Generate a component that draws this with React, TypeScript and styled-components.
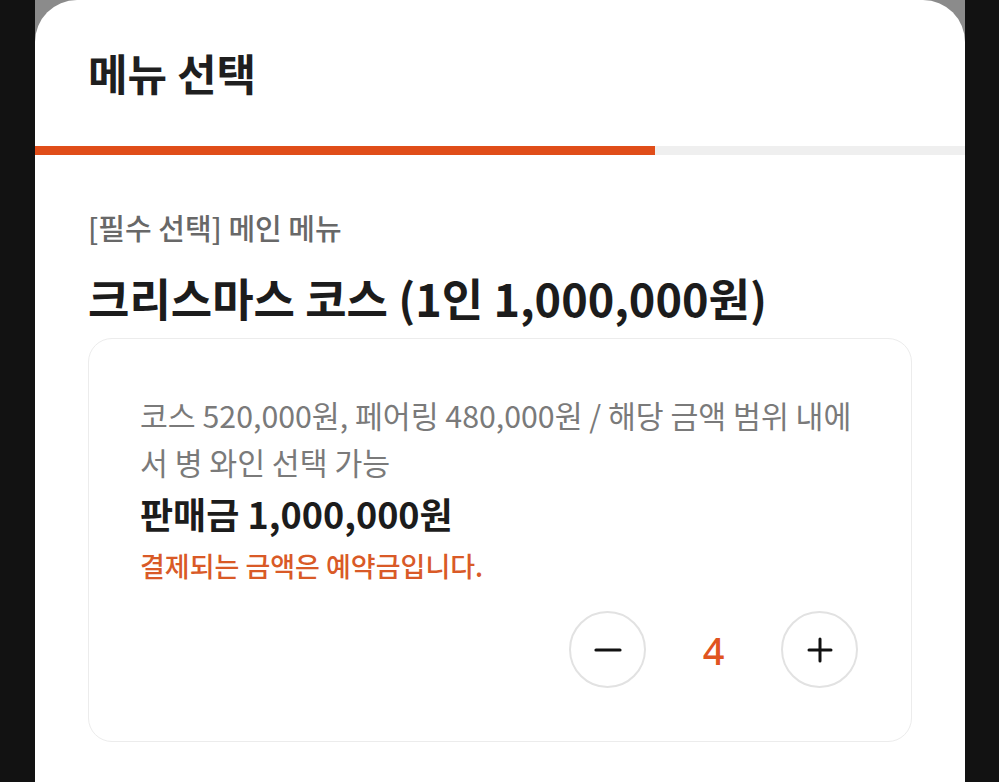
import React from "react";
import styled, { createGlobalStyle } from "styled-components";

const Global = createGlobalStyle`
  html, body { margin: 0; padding: 0; background: #121212; }
  body { font-family: "Noto Sans CJK KR", "Noto Sans", sans-serif; }
  * { box-sizing: border-box; }
`;

const Frame = styled.div`
  width: 999px;
  height: 782px;
  background: #121212;
  display: flex;
  justify-content: center;
  overflow: hidden;
`;

const Screen = styled.div`
  width: 930px;
  height: 782px;
  margin-left: 1px;
  background: #8b8b8b;
  display: flex;
  flex-direction: column;
`;

const Sheet = styled.div`
  flex: 1;
  background: #ffffff;
  border-radius: 42px 42px 0 0;
  display: flex;
  flex-direction: column;
`;

const Header = styled.div`
  height: 146px;
  padding: 42px 53px 0;
`;

const Title = styled.h1`
  margin: 0;
  font-size: 43px;
  line-height: 60px;
  font-weight: 700;
  color: #1f1f1f;
`;

const Progress = styled.div`
  height: 9px;
  background: #efefef;
  display: flex;
`;

const ProgressFill = styled.div`
  background: #e04d19;
  height: 100%;
`;

const Body = styled.div`
  padding: 54px 53px 0;
  display: flex;
  flex-direction: column;
`;

const Section = styled.div`
  font-size: 29px;
  line-height: 36px;
  font-weight: 500;
  color: #686868;
`;

const CourseTitle = styled.h2`
  margin: 23px 0 0;
  font-size: 45px;
  line-height: 60px;
  font-weight: 700;
  color: #1c1c1c;
`;

const Card = styled.div`
  margin-top: 10px;
  border: 1px solid #ececec;
  border-radius: 24px;
  padding: 53px 53px 53px 51px;
  display: flex;
  flex-direction: column;
`;

const Desc = styled.p`
  margin: 0;
  font-size: 30.3px;
  line-height: 47px;
  font-weight: 400;
  color: #7a7a7a;
`;

const Price = styled.div`
  margin-top: 2px;
  font-size: 36px;
  line-height: 50px;
  font-weight: 700;
  color: #1c1c1c;
`;

const Notice = styled.div`
  margin-top: 8px;
  font-size: 27px;
  line-height: 40px;
  font-weight: 500;
  color: #d95a27;
`;

const Stepper = styled.div`
  margin-top: 25px;
  display: flex;
  justify-content: flex-end;
  align-items: center;
`;

const RoundButton = styled.button`
  width: 77px;
  height: 77px;
  border-radius: 50%;
  border: 2px solid #e2e2e2;
  background: #fff;
  display: flex;
  align-items: center;
  justify-content: center;
  padding: 0;
  color: #111;
`;

const Count = styled.div`
  width: 135px;
  text-align: center;
  font-family: "Noto Sans", sans-serif;
  font-size: 38px;
  font-weight: 500;
  color: #e0541f;
`;

const Minus = () => (
  <svg width="28" height="28" viewBox="0 0 28 28">
    <line x1="2" y1="14" x2="26" y2="14" stroke="#111" strokeWidth="3.2" strokeLinecap="round" />
  </svg>
);

const Plus = () => (
  <svg width="28" height="28" viewBox="0 0 28 28">
    <line x1="3" y1="14" x2="25" y2="14" stroke="#111" strokeWidth="3" strokeLinecap="round" />
    <line x1="14" y1="3" x2="14" y2="25" stroke="#111" strokeWidth="3" strokeLinecap="round" />
  </svg>
);

export default function App() {
  const progress = 66.7;
  return (
    <Frame>
      <Global />
      <Screen>
        <Sheet>
          <Header>
            <Title>메뉴 선택</Title>
          </Header>
          <Progress>
            <ProgressFill style={{ width: `${progress}%` }} />
          </Progress>
          <Body>
            <Section>[필수 선택] 메인 메뉴</Section>
            <CourseTitle>크리스마스 코스 (1인 1,000,000원)</CourseTitle>
            <Card>
              <Desc>코스 520,000원, 페어링 480,000원 / 해당 금액 범위 내에서 병 와인 선택 가능</Desc>
              <Price>판매금 1,000,000원</Price>
              <Notice>결제되는 금액은 예약금입니다.</Notice>
              <Stepper>
                <RoundButton aria-label="decrease"><Minus /></RoundButton>
                <Count>4</Count>
                <RoundButton aria-label="increase"><Plus /></RoundButton>
              </Stepper>
            </Card>
          </Body>
        </Sheet>
      </Screen>
    </Frame>
  );
}
